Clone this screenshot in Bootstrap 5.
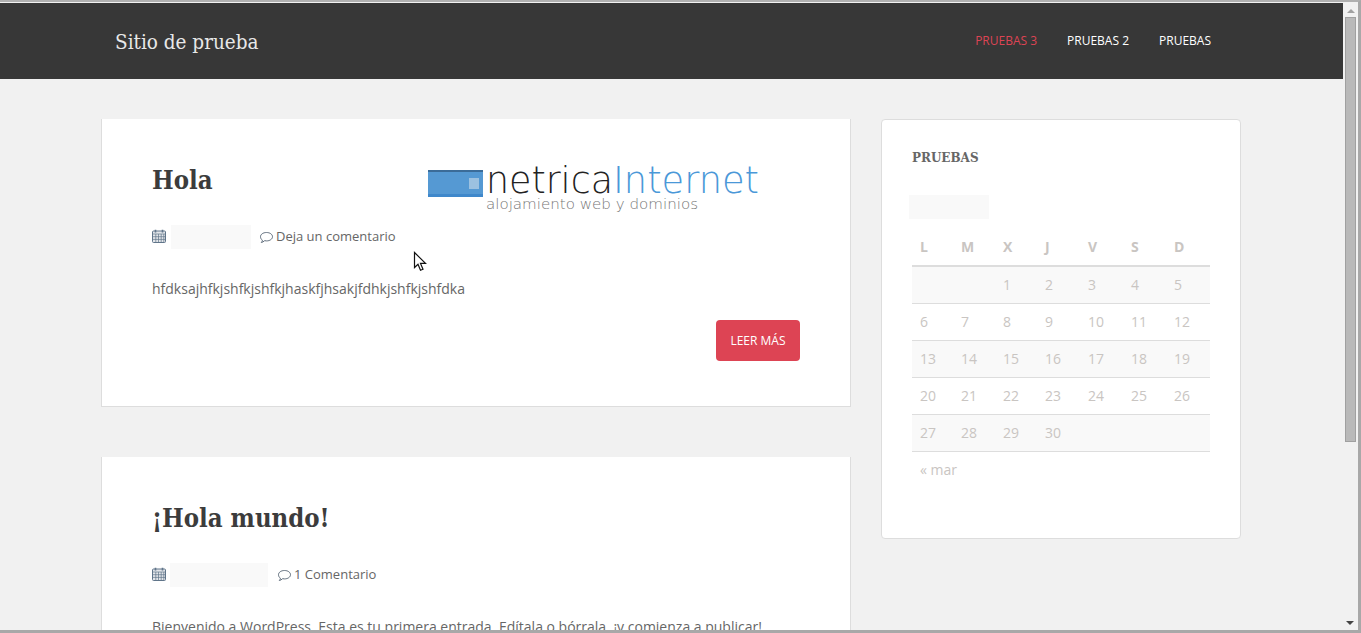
<!DOCTYPE html>
<html lang="es">
<head>
  <meta charset="UTF-8" />
  <meta name="viewport" content="width=device-width, initial-scale=1.0"/>
  <title>Sitio de prueba</title>
  <link href="https://cdn.jsdelivr.net/npm/bootstrap@5.3.2/dist/css/bootstrap.min.css" rel="stylesheet">
  <style>
    html, body { height: 100%; overflow: hidden; }
    body { font-family: "Open Sans", sans-serif; font-size: 14px; color: #666; background: #f1f1f1; }
    .ventana { height: 100vh; border-top: 2px solid #b0b0b0; border-right: 3px solid #a8a8a8; border-bottom: 3px solid #a8a8a8; position: relative; }
    .zona-pagina { overflow: hidden; min-width: 0; }
    .cabecera { background: #373737; height: 77px; border-top: 1px solid #f1f1f1; }
    .ancho-sitio { width: 1170px; margin-left: 86px; padding: 0 15px; }
    .marca { font-family: "DejaVu Serif Condensed", "DejaVu Serif", serif; font-size: 20.5px; color: #e8e8e8; margin-left: 14px; padding-top: 2px; }
    .menu-sitio a { font-size: 12px; color: #fff; text-transform: uppercase; text-decoration: none; }
    .menu-sitio a.activo { color: #dd4454; }
    .menu-sitio { gap: 30px; margin-right: 30px; }
    .columnas { --bs-gutter-x: 30px; padding-top: 40px; }
    .entrada { background: #fff; border: 1px solid #ddd; border-top: 0; height: 288px; padding: 46px 50px 0; margin-bottom: 50px; }
    .entrada h2 { font-family: "DejaVu Serif Condensed", "DejaVu Serif", serif; font-weight: 700; font-size: 25.5px; color: #3c3c3c; margin: 0; }
    .titulo-fila { height: 60px; }
    .logo-netrica { margin-left: 215px; margin-top: -10px; flex: none; }
    .meta-entrada { font-size: 13px; height: 24px; }
    .icono-fecha { margin-top: -2px; }
    .oculto { background: #f9f9f9; height: 24px; }
    .texto-entrada { margin: 29px 0 0; font-size: 14px; }
    .btn-leer { background: #dd4454; color: #fff; font-size: 12px; border-radius: 4px; padding: 12px 14.5px; line-height: 17px; border: 0; text-transform: uppercase; }
    .btn-leer:hover { background: #dd4454; color: #fff; }
    .lateral { background: #fff; border: 1px solid #ddd; border-radius: 4px; height: 420px; padding: 29px 30px; }
    .lateral h3 { font-family: "DejaVu Serif Condensed", "DejaVu Serif", serif; font-weight: 700; font-size: 13.3px; color: #666; margin: 1px 0 0; text-transform: uppercase; }
    .mes-oculto { background: #f9f9f9; width: 80px; height: 24px; margin: 29px 0 0 -3px; }
    .calendario { margin: 10px 0 0; width: 298px; table-layout: fixed; color: #c9c5c2; font-size: 14px; }
    .calendario th { font-weight: 700; height: 37px; padding: 0 8px; border-bottom: 2px solid #ddd; width: 43px; }
    .calendario th:nth-child(1) { width: 41px; }
    .calendario th:nth-child(2), .calendario th:nth-child(3) { width: 42px; }
    .calendario th:nth-child(7) { width: 44px; }
    .calendario td { height: 37px; padding: 0 8px 2px; border-bottom: 1px solid #ddd; }
    .calendario tbody tr:first-child td { height: 38px; }
    .calendario tbody tr:nth-child(odd) td { background: #f9f9f9; }
    .enlace-mes { color: #c9c5c2; padding: 7px 8px 0; font-size: 14px; }
    .barra-scroll { width: 15px; background: #f1f1f1; flex: none; position: relative; }
    .flecha-arriba { width: 0; height: 0; border: 4px solid transparent; border-top: 0; border-bottom: 4px solid #a0a0a0; margin: 7px auto 0; }
    .pulgar { background: #b9b9b9; border: 1px solid #a0a0a0; height: 425px; margin: 4px 2px 0 2px; }
    .flecha-abajo { width: 0; height: 0; border: 4px solid transparent; border-bottom: 0; border-top: 4px solid #444; position: absolute; bottom: 5px; left: 3px; }
    .puntero { position: absolute; left: 413px; top: 249px; }
  </style>
</head>
<body>
  <div class="ventana d-flex">
    <div class="zona-pagina flex-grow-1">
      <header class="cabecera">
        <div class="ancho-sitio d-flex align-items-center justify-content-between h-100">
          <span class="marca">Sitio de prueba</span>
          <nav class="menu-sitio d-flex">
            <a class="activo" href="#">Pruebas 3</a>
            <a href="#">Pruebas 2</a>
            <a href="#">Pruebas</a>
          </nav>
        </div>
      </header>
      <div class="ancho-sitio">
        <div class="row columnas">
          <div class="col-8">
            <article class="entrada">
              <div class="titulo-fila d-flex">
                <h2>Hola</h2>
                <svg class="logo-netrica" width="334" height="60" viewBox="0 -10 334 60">
                  <rect x="0" y="5" width="55" height="27" fill="#5599d3"/>
                  <rect x="0" y="5" width="55" height="2" fill="#3b6c99"/>
                  <rect x="0" y="29" width="55" height="3" fill="#3f88cb"/>
                  <rect x="41" y="13" width="10" height="11" fill="#9cc1e0"/>
                  <text x="58" y="28" font-family="DejaVu Sans" font-weight="200" font-size="38" fill="#222" textLength="127" lengthAdjust="spacingAndGlyphs">netrica</text>
                  <text x="185" y="28" font-family="DejaVu Sans" font-weight="200" font-size="38" fill="#4a98d8" textLength="146" lengthAdjust="spacingAndGlyphs">Internet</text>
                  <text x="58" y="44" font-family="DejaVu Sans" font-weight="200" font-size="14.5" fill="#777" textLength="212" lengthAdjust="spacingAndGlyphs">alojamiento web y dominios</text>
                </svg>
              </div>
              <div class="meta-entrada d-flex align-items-center">
                <svg class="icono-fecha" width="14" height="14" viewBox="0 0 14 14" fill="none"><rect x="0.5" y="2" width="13" height="11.5" rx="1" fill="#e3e6ea" stroke="#60758a"/><path d="M1 5h12M1 7.7h12M1 10.4h12M3.8 5v8M6.5 5v8M9.2 5v8M11.8 5v8" stroke="#60758a" stroke-width=".7"/><path d="M3.5 .8v2.6M10.5 .8v2.6" stroke="#60758a" stroke-width="1.6"/></svg>
                <span class="oculto" style="width:80px;margin-left:5px"></span>
                <svg class="ms-2" width="15" height="13" viewBox="0 0 14 13" fill="none" stroke="#5f6d7c"><path d="M7 1.5c3.3 0 6 1.8 6 4.2s-2.7 4.2-6 4.2c-.7 0-1.3-.1-1.9-.2C4 10.7 3 11.3 1.8 11.5c.6-.7 1-1.4 1.1-2.3C1.7 8.4 1 7.1 1 5.7 1 3.3 3.7 1.5 7 1.5z"/></svg>
                <span style="margin-left:2px">Deja un comentario</span>
              </div>
              <p class="texto-entrada">hfdksajhfkjshfkjshfkjhaskfjhsakjfdhkjshfkjshfdka</p>
              <div class="d-flex justify-content-end" style="margin-top:21px">
                <a class="btn btn-leer" href="#">Leer más</a>
              </div>
            </article>
            <article class="entrada">
              <div class="titulo-fila d-flex">
                <h2>¡Hola mundo!</h2>
              </div>
              <div class="meta-entrada d-flex align-items-center">
                <svg class="icono-fecha" width="14" height="14" viewBox="0 0 14 14" fill="none"><rect x="0.5" y="2" width="13" height="11.5" rx="1" fill="#e3e6ea" stroke="#60758a"/><path d="M1 5h12M1 7.7h12M1 10.4h12M3.8 5v8M6.5 5v8M9.2 5v8M11.8 5v8" stroke="#60758a" stroke-width=".7"/><path d="M3.5 .8v2.6M10.5 .8v2.6" stroke="#60758a" stroke-width="1.6"/></svg>
                <span class="oculto" style="width:98px;margin-left:4px"></span>
                <svg style="margin-left:9px" width="15" height="13" viewBox="0 0 14 13" fill="none" stroke="#5f6d7c"><path d="M7 1.5c3.3 0 6 1.8 6 4.2s-2.7 4.2-6 4.2c-.7 0-1.3-.1-1.9-.2C4 10.7 3 11.3 1.8 11.5c.6-.7 1-1.4 1.1-2.3C1.7 8.4 1 7.1 1 5.7 1 3.3 3.7 1.5 7 1.5z"/></svg>
                <span style="margin-left:2px">1 Comentario</span>
              </div>
              <p class="texto-entrada">Bienvenido a WordPress. Esta es tu primera entrada. Edítala o bórrala, ¡y comienza a publicar!</p>
            </article>
          </div>
          <div class="col-4">
            <aside class="lateral">
              <h3>Pruebas</h3>
              <div class="mes-oculto"></div>
              <table class="calendario">
                <thead>
                  <tr><th>L</th><th>M</th><th>X</th><th>J</th><th>V</th><th>S</th><th>D</th></tr>
                </thead>
                <tbody>
                  <tr><td></td><td></td><td>1</td><td>2</td><td>3</td><td>4</td><td>5</td></tr>
                  <tr><td>6</td><td>7</td><td>8</td><td>9</td><td>10</td><td>11</td><td>12</td></tr>
                  <tr><td>13</td><td>14</td><td>15</td><td>16</td><td>17</td><td>18</td><td>19</td></tr>
                  <tr><td>20</td><td>21</td><td>22</td><td>23</td><td>24</td><td>25</td><td>26</td></tr>
                  <tr><td>27</td><td>28</td><td>29</td><td>30</td><td></td><td></td><td></td></tr>
                </tbody>
              </table>
              <div class="enlace-mes">« mar</div>
            </aside>
          </div>
        </div>
      </div>
    </div>
    <div class="barra-scroll">
      <div class="flecha-arriba"></div>
      <div class="pulgar"></div>
      <div class="flecha-abajo"></div>
    </div>
    <svg class="puntero" width="16" height="22" viewBox="0 0 16 22"><path d="M1.5 1.5v15l3.5-3.3 2.5 6 2.5-1-2.5-5.8h5z" fill="#fff" stroke="#111" stroke-width="1.2"/></svg>
  </div>
  <script src="https://cdn.jsdelivr.net/npm/bootstrap@5.3.2/dist/js/bootstrap.bundle.min.js"></script>
</body>
</html>
